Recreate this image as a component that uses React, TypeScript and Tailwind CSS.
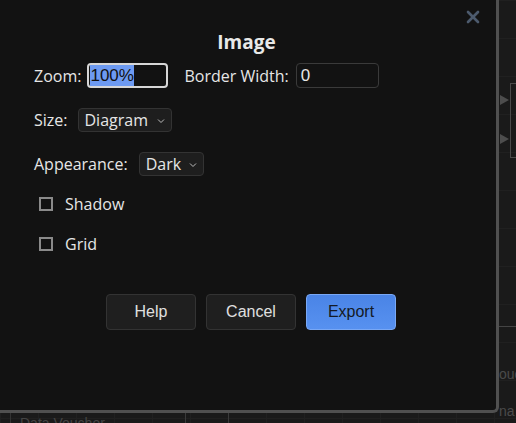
import { X } from "lucide-react";

const label = "font-['Open_Sans',sans-serif] text-[16px] text-[#e6e6e6]";

function Select({ value, width }: { value: string; width: string }) {
  return (
    <div
      className={`flex h-[24px] items-center justify-between rounded-[4px] border border-[#333] bg-[#1e1e1e] pl-[6px] pr-[6px] ${width}`}
    >
      <span className="font-['Open_Sans',sans-serif] text-[16px] leading-none text-[#e6e6e6]">
        {value}
      </span>
      <svg width="8" height="6" viewBox="0 0 8 6" className="mt-[2px]">
        <path d="M1 1.5 L4 4.5 L7 1.5" fill="none" stroke="#bbb" strokeWidth="1" />
      </svg>
    </div>
  );
}

function Check({ text }: { text: string }) {
  return (
    <div className="flex h-[20px] items-center pl-[5px]">
      <span className="h-[14px] w-[14px] border-2 border-[#8a8a8a]" />
      <span className={`${label} ml-[12px]`}>{text}</span>
    </div>
  );
}

function Button({ text, primary }: { text: string; primary?: boolean }) {
  return (
    <button
      className={
        primary
          ? "h-[36px] w-[90px] rounded-[4px] border border-[#79a8f5] bg-[linear-gradient(#4a84e6,#5791f0)] font-['Liberation_Sans',sans-serif] text-[16px] text-[#141a24]"
          : "h-[36px] w-[90px] rounded-[4px] border border-[#333] bg-[#1f1f1f] font-['Liberation_Sans',sans-serif] text-[16px] text-[#e0e0e0]"
      }
    >
      {text}
    </button>
  );
}

export default function App() {
  return (
    <div className="relative h-[423px] w-[516px] overflow-hidden bg-[#1a1a1a] bg-[image:linear-gradient(#202020_1px,transparent_1px),linear-gradient(90deg,#202020_1px,transparent_1px)] bg-[size:38px_38px]">
      {/* diagram behind the dialog */}
      <div className="absolute left-[510px] top-[83px] h-[75px] w-[20px] border border-[#4a4a4a]" />
      <div className="absolute left-[500px] top-[95px] h-0 w-0 border-y-[5px] border-l-[9px] border-y-transparent border-l-[#4d4d4d]" />
      <div className="absolute left-[500px] top-[134px] h-0 w-0 border-y-[5px] border-l-[9px] border-y-transparent border-l-[#4d4d4d]" />
      <div className="absolute left-[499px] top-[326px] h-px w-[20px] bg-[#444]" />
      <div className="absolute left-[499px] top-[364px] font-['Liberation_Sans',sans-serif] text-[14px] text-[#4a4a4a]">
        ouc
      </div>
      <div className="absolute left-[499px] top-[401px] font-['Liberation_Sans',sans-serif] text-[14px] text-[#4a4a4a]">
        na
      </div>
      <div className="absolute left-[10px] top-[413px] h-[10px] w-px bg-[#333]" />
      <div className="absolute left-[185px] top-[413px] h-[10px] w-px bg-[#3a3a3a]" />
      <div className="absolute left-[228px] top-[413px] h-[10px] w-px bg-[#3a3a3a]" />
      <div className="absolute left-[20px] top-[413px] font-['Liberation_Sans',sans-serif] text-[14px] text-[#444]">
        Data Voucher
      </div>

      {/* dialog */}
      <div className="relative h-[413px] w-[499px] rounded-br-[6px] border-b-[3px] border-r-[3px] border-[#505050] bg-[#121212] px-[34px] pt-[31px]">
        <X
          size={20}
          strokeWidth={3.2}
          color="#4c5a6d"
          className="absolute right-[13px] top-[7px]"
        />
        <div className="h-[22px] pr-[3px] text-center font-['Open_Sans',sans-serif] text-[19px] font-bold leading-[22px] text-[#e8e8e8]">
          Image
        </div>

        <div className="mt-[10px] flex items-center">
          <span className={label}>Zoom:</span>
          <div className="ml-[6px] flex h-[25px] w-[81px] items-center rounded-[4px] border-2 border-[#d6d6d6] pl-[1px]">
            <span className="bg-[#6d9af2] font-['Liberation_Sans',sans-serif] text-[17px] leading-[21px] text-[#101010]">
              100%
            </span>
          </div>
          <span className={`${label} ml-[16px]`}>Border Width:</span>
          <div className="ml-[7px] flex h-[25px] w-[83px] items-center rounded-[4px] border border-[#3a3a3a] pl-[4px] font-['Liberation_Sans',sans-serif] text-[17px] text-[#e6e6e6]">
            0
          </div>
        </div>

        <div className="mt-[20px] flex items-center">
          <span className={label}>Size:</span>
          <div className="ml-[10px]">
            <Select value="Diagram" width="w-[94px]" />
          </div>
        </div>

        <div className="mt-[20px] flex items-center">
          <span className={label}>Appearance:</span>
          <div className="ml-[11px]">
            <Select value="Dark" width="w-[65px]" />
          </div>
        </div>

        <div className="mt-[18px]">
          <Check text="Shadow" />
        </div>
        <div className="mt-[20px]">
          <Check text="Grid" />
        </div>

        <div className="mt-[40px] flex justify-center gap-[10px] pl-[6px]">
          <Button text="Help" />
          <Button text="Cancel" />
          <Button text="Export" primary />
        </div>
      </div>
    </div>
  );
}
